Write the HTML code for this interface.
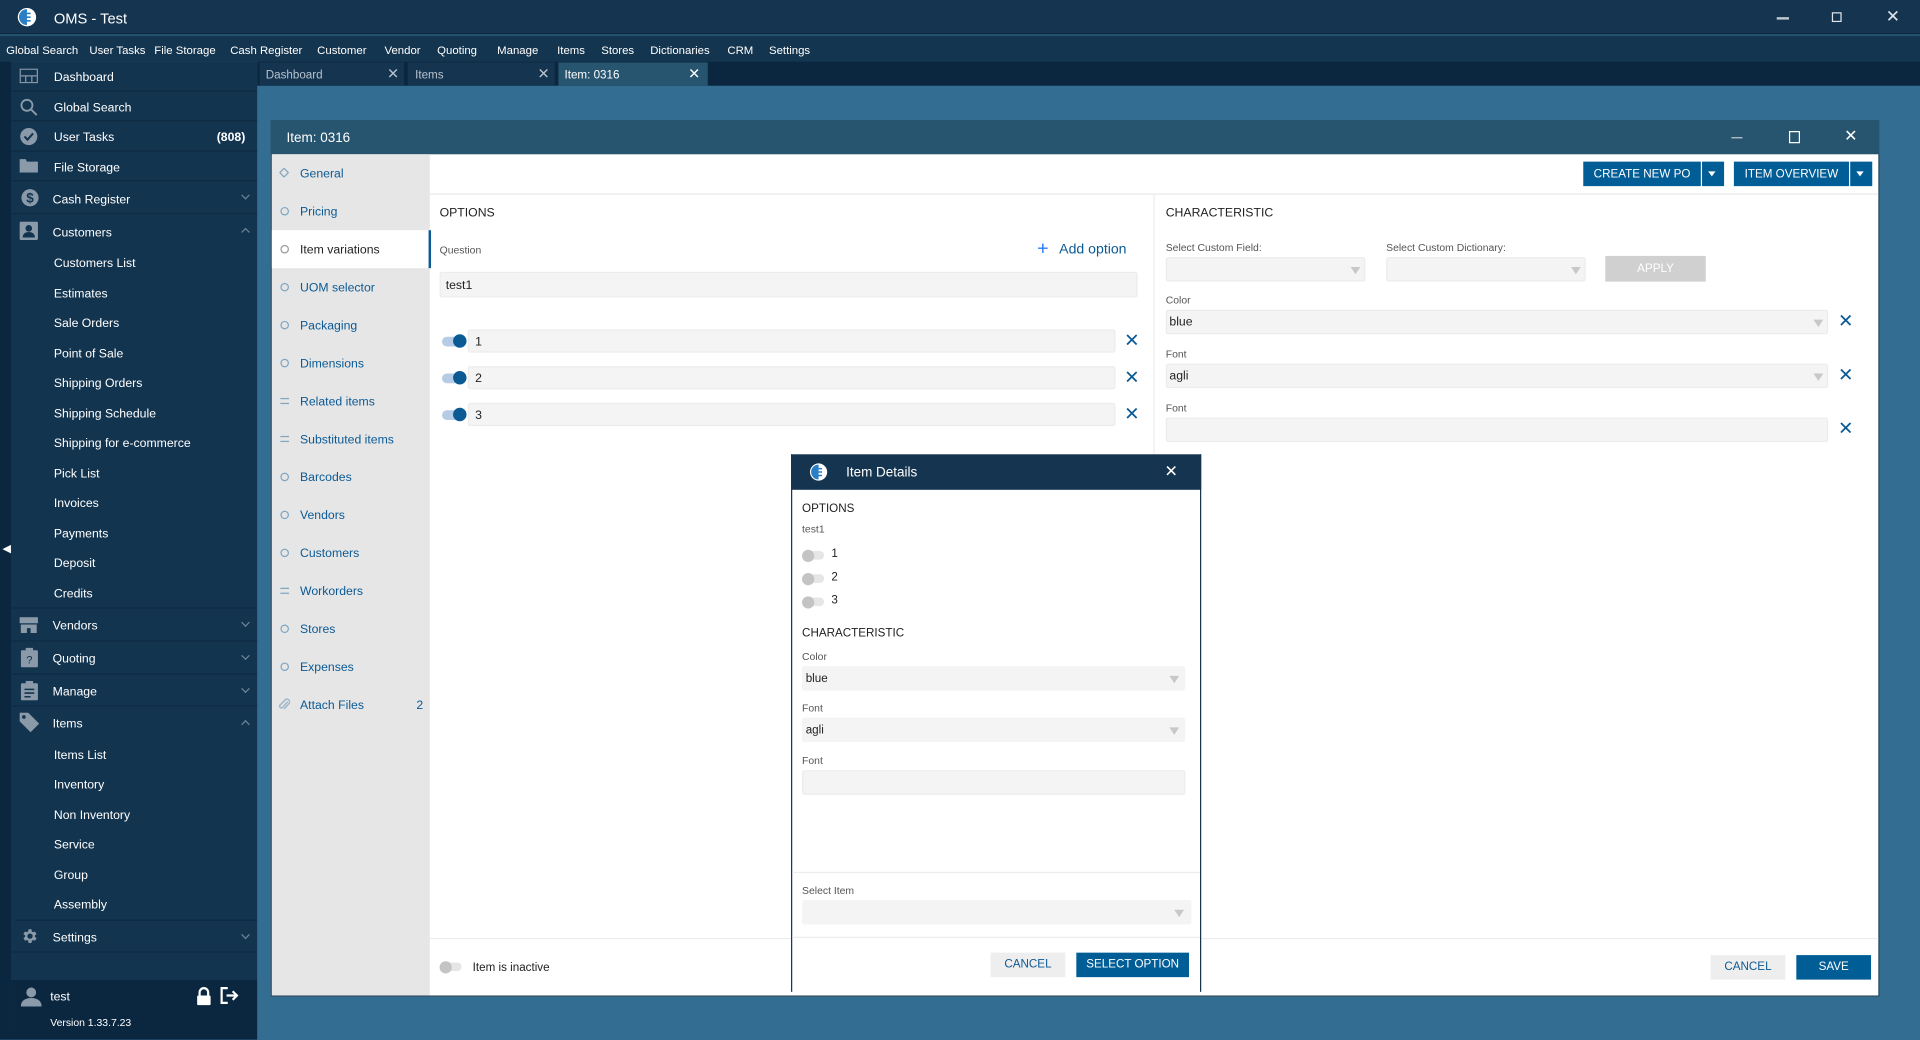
<!DOCTYPE html>
<html><head><meta charset="utf-8">
<style>
*{box-sizing:border-box;margin:0;padding:0}
html,body{width:1920px;height:1040px;overflow:hidden;background:#336d91;font-family:"Liberation Sans",sans-serif}
#w{position:absolute;left:0;top:0;width:1568px;height:849px;transform:scale(1.22449);transform-origin:0 0;background:#336d91;font-size:10px}
.a{position:absolute}
.t{position:absolute;white-space:nowrap}
.m{position:absolute;top:36px;color:#fff;font-size:9.3px;white-space:nowrap}
.side .it{position:absolute;left:9px;width:201px;color:#fff;font-size:10px;border-bottom:1px solid #0e2b44}
.side .it>span.t{margin-top:1px}
.side .sub{position:absolute;left:44px;color:#fff;font-size:10px;margin-top:1px}
.chev{position:absolute;right:7px;width:5px;height:5px;border-right:1.2px solid #6f8396;border-bottom:1.2px solid #6f8396}
.nav{position:absolute;left:0;width:130px;height:31px;color:#0c5a94;font-size:10px}
.nav span{position:absolute;left:23px;top:11px}
.nav i{position:absolute;left:7px;top:12px;width:7px;height:7px;border:1.5px solid #7fa6c2;border-radius:50%}
.nav b{position:absolute;left:7px;top:13px;width:7px;height:5px;border-top:1.2px solid #7fa6c2;border-bottom:1.2px solid #7fa6c2}
.inp{position:absolute;background:#f4f4f4;border-radius:2px;border:1px solid #ececec}
.lbl{position:absolute;color:#555;font-size:8.5px}
.x{position:absolute;color:#0c5a94;font-size:15px;line-height:1}
.tri{position:absolute;width:0;height:0;border-left:4px solid transparent;border-right:4px solid transparent;border-top:6px solid #c8c8c8}
.tog{position:absolute;width:20px;height:8px;border-radius:4px;background:#b5cbe6}
.tog::after{content:"";position:absolute;right:0;top:-2px;width:11px;height:11px;border-radius:50%;background:#0c5a94}
.togo{position:absolute;width:18px;height:7px;border-radius:4px;background:#e6e6e6}
.togo::after{content:"";position:absolute;left:0;top:-1.5px;width:10px;height:10px;border-radius:50%;background:#c4c4c4}
.btn{position:absolute;background:#005d96;color:#fff;font-size:9.5px;text-align:center}
.btng{position:absolute;background:#eeeeee;color:#0c5a94;font-size:9.5px;text-align:center}
</style></head><body>
<div id="w">
<div class="a" style="left:0;top:0;width:1568px;height:28px;background:#15344f;border-bottom:1px solid #0d263b"></div>
<svg class="a" style="left:14px;top:6px" width="16" height="16" viewBox="0 0 16 16"><circle cx="8" cy="8" r="7.5" fill="#fff"/><path d="M8 1.5a6.5 6.5 0 0 0 0 13" fill="#2a7fc4"/><path d="M6 5h5M5 8h6M6 11h5" stroke="#2a7fc4" stroke-width="1.3"/></svg>
<div class="t" style="left:44px;top:8px;color:#fff;font-size:12px">OMS - Test</div>
<div class="a" style="left:1451px;top:14px;width:10px;height:1.5px;background:#bfc8d0"></div>
<div class="a" style="left:1496px;top:10px;width:8px;height:8px;border:1.3px solid #dfe5ea"></div>
<div class="t" style="left:1540px;top:5px;color:#dfe5ea;font-size:14px">✕</div>
<div class="a" style="left:0;top:29px;width:1568px;height:21px;background:#14354f"></div>
<div class="m" style="left:5px">Global Search</div>
<div class="m" style="left:73px">User Tasks</div>
<div class="m" style="left:126px">File Storage</div>
<div class="m" style="left:188px">Cash Register</div>
<div class="m" style="left:259px">Customer</div>
<div class="m" style="left:314px">Vendor</div>
<div class="m" style="left:357px">Quoting</div>
<div class="m" style="left:406px">Manage</div>
<div class="m" style="left:455px">Items</div>
<div class="m" style="left:491px">Stores</div>
<div class="m" style="left:531px">Dictionaries</div>
<div class="m" style="left:594px">CRM</div>
<div class="m" style="left:628px">Settings</div>
<div class="a" style="left:210px;top:50px;width:1358px;height:20px;background:#0b2740"></div>
<div class="a" style="left:212px;top:51px;width:118px;height:19px;background:#15344f"></div>
<div class="t" style="left:217px;top:56px;color:#b7c3ce;font-size:9.5px">Dashboard</div><div class="t" style="left:316px;top:53px;color:#b7c3ce;font-size:12px">✕</div>
<div class="a" style="left:333px;top:51px;width:120px;height:19px;background:#15344f"></div>
<div class="t" style="left:339px;top:56px;color:#b7c3ce;font-size:9.5px">Items</div><div class="t" style="left:439px;top:53px;color:#b7c3ce;font-size:12px">✕</div>
<div class="a" style="left:456px;top:51px;width:122px;height:19px;background:#27546f"></div>
<div class="t" style="left:461px;top:56px;color:#fff;font-size:9.5px">Item: 0316</div><div class="t" style="left:562px;top:53px;color:#fff;font-size:12px">✕</div>
<div class="side">
<div class="a" style="left:0;top:50px;width:9px;height:799px;background:#0b2740"></div>
<div class="a" style="left:9px;top:50px;width:201px;height:750px;background:#13344f"></div>
<div class="t" style="left:2px;top:443px;color:#fff;font-size:9px">◀</div>
<div class="it" style="top:50px;height:25px"><svg class="a" style="left:7px;top:6px" width="15" height="12"><rect x="0.5" y="0.5" width="14" height="11" fill="none" stroke="#8a9aa8"/><path d="M1 6h13M5 6v5M10 6v5" stroke="#8a9aa8"/></svg><span class="t" style="left:35px;top:7px">Dashboard</span></div>
<div class="it" style="top:75px;height:24px"><svg class="a" style="left:7px;top:5px" width="15" height="15"><circle cx="6" cy="6" r="4.5" fill="none" stroke="#8a9aa8" stroke-width="1.5"/><path d="M9.5 9.5l4.5 4.5" stroke="#8a9aa8" stroke-width="1.6"/></svg><span class="t" style="left:35px;top:7px">Global Search</span></div>
<div class="it" style="top:99px;height:25px"><svg class="a" style="left:7px;top:5px" width="15" height="15"><circle cx="7.5" cy="7.5" r="7" fill="#8a9aa8"/><path d="M4 7.5l2.5 2.5 4.5-5" stroke="#13344f" stroke-width="1.7" fill="none"/></svg><span class="t" style="left:35px;top:7px">User Tasks</span><span class="t" style="left:168px;top:7px;font-weight:bold">(808)</span></div>
<div class="it" style="top:124px;height:24px"><svg class="a" style="left:7px;top:5px" width="15" height="12"><path d="M0 1h5l1 2h9v9H0z" fill="#8a9aa8"/></svg><span class="t" style="left:35px;top:7px">File Storage</span></div>
<div class="it" style="top:148px;height:27px"><svg class="a" style="left:8px;top:6px" width="15" height="15"><circle cx="7.5" cy="7.5" r="7" fill="#8a9aa8"/><text x="7.5" y="11.5" font-size="11" text-anchor="middle" fill="#13344f" font-family="Liberation Sans" font-weight="bold">$</text></svg><span class="t" style="left:34px;top:9px">Cash Register</span><i class="chev" style="top:9px;transform:rotate(45deg)"></i></div>
<div class="it" style="top:175px;height:27px;border:none"><svg class="a" style="left:7px;top:6px" width="15" height="15"><rect width="15" height="15" rx="1" fill="#8a9aa8"/><circle cx="7.5" cy="5.5" r="2.7" fill="#13344f"/><path d="M2.5 13c0-3 2.2-4.5 5-4.5s5 1.5 5 4.5z" fill="#13344f"/></svg><span class="t" style="left:34px;top:9px">Customers</span><i class="chev" style="top:12px;transform:rotate(-135deg)"></i></div>
<div class="sub" style="top:209px">Customers List</div>
<div class="sub" style="top:234px">Estimates</div>
<div class="sub" style="top:258px">Sale Orders</div>
<div class="sub" style="top:283px">Point of Sale</div>
<div class="sub" style="top:307px">Shipping Orders</div>
<div class="sub" style="top:332px">Shipping Schedule</div>
<div class="sub" style="top:356px">Shipping for e-commerce</div>
<div class="sub" style="top:381px">Pick List</div>
<div class="sub" style="top:405px">Invoices</div>
<div class="sub" style="top:430px">Payments</div>
<div class="sub" style="top:454px">Deposit</div>
<div class="sub" style="top:479px">Credits</div>
<div class="a" style="left:9px;top:496px;width:201px;height:1px;background:#0e2b44"></div>
<div class="it" style="top:497px;height:27px"><svg class="a" style="left:7px;top:7px" width="15" height="13"><path d="M0 0h15v5H0z M1 6h13v7H9V9H6v4H1z" fill="#8a9aa8"/></svg><span class="t" style="left:34px;top:8px">Vendors</span><i class="chev" style="top:9px;transform:rotate(45deg)"></i></div>
<div class="it" style="top:524px;height:27px"><svg class="a" style="left:8px;top:5px" width="14" height="16"><rect y="2" width="14" height="14" rx="1" fill="#8a9aa8"/><rect x="4" y="0" width="6" height="4" fill="#8a9aa8"/><text x="7" y="13" font-size="9" text-anchor="middle" fill="#13344f" font-family="Liberation Sans">?</text></svg><span class="t" style="left:34px;top:8px">Quoting</span><i class="chev" style="top:9px;transform:rotate(45deg)"></i></div>
<div class="it" style="top:551px;height:26px"><svg class="a" style="left:8px;top:5px" width="14" height="16"><rect y="2" width="14" height="14" rx="1" fill="#8a9aa8"/><rect x="4" y="0" width="6" height="4" fill="#8a9aa8"/><path d="M3 7h8M3 10h8M3 13h5" stroke="#13344f" stroke-width="1.3"/></svg><span class="t" style="left:34px;top:8px">Manage</span><i class="chev" style="top:9px;transform:rotate(45deg)"></i></div>
<div class="it" style="top:577px;height:27px;border:none"><svg class="a" style="left:7px;top:5px" width="16" height="16"><path d="M0 0h7l9 9-7 7-9-9z" fill="#8a9aa8"/><circle cx="3.5" cy="3.5" r="1.5" fill="#13344f"/></svg><span class="t" style="left:34px;top:8px">Items</span><i class="chev" style="top:12px;transform:rotate(-135deg)"></i></div>
<div class="sub" style="top:611px">Items List</div>
<div class="sub" style="top:635px">Inventory</div>
<div class="sub" style="top:660px">Non Inventory</div>
<div class="sub" style="top:684px">Service</div>
<div class="sub" style="top:709px">Group</div>
<div class="sub" style="top:733px">Assembly</div>
<div class="a" style="left:12px;top:751px;width:198px;height:1px;background:#0e2b44"></div>
<div class="it" style="top:752px;height:26px"><svg class="a" style="left:8px;top:5px" width="15" height="15" viewBox="0 0 24 24"><path fill="#8a9aa8" d="M19.4 13a7.7 7.7 0 0 0 0-2l2.1-1.6-2-3.5-2.5 1a7 7 0 0 0-1.7-1L15 3h-4l-.4 2.9a7 7 0 0 0-1.7 1l-2.5-1-2 3.5L6.6 11a7.7 7.7 0 0 0 0 2l-2.1 1.6 2 3.5 2.5-1a7 7 0 0 0 1.7 1L11 21h4l.4-2.9a7 7 0 0 0 1.7-1l2.5 1 2-3.5zM13 15.5a3.5 3.5 0 1 1 0-7 3.5 3.5 0 0 1 0 7z" transform="translate(-1 0)"/></svg><span class="t" style="left:34px;top:8px">Settings</span><i class="chev" style="top:9px;transform:rotate(45deg)"></i></div>
<div class="a" style="left:9px;top:800px;width:201px;height:49px;background:#0b2740"></div>
<svg class="a" style="left:17px;top:806px" width="17" height="16"><circle cx="8.5" cy="4.5" r="4" fill="#8a9aa8"/><path d="M0 16c0-5 4-7 8.5-7S17 11 17 16z" fill="#8a9aa8"/></svg>
<div class="t" style="left:41px;top:809px;color:#fff;font-size:10px">test</div>
<svg class="a" style="left:160px;top:806px" width="13" height="15"><path d="M3 7V4.5a3.5 3.5 0 0 1 7 0V7" fill="none" stroke="#fff" stroke-width="1.8"/><rect x="1" y="7" width="11" height="8" rx="1" fill="#fff"/></svg>
<svg class="a" style="left:180px;top:806px" width="16" height="14"><path d="M6 1H1v12h5" fill="none" stroke="#fff" stroke-width="1.8"/><path d="M5 7h8M10 3.5 13.5 7 10 10.5" fill="none" stroke="#fff" stroke-width="1.8"/></svg>
<div class="t" style="left:41px;top:830px;color:#fff;font-size:8.5px">Version 1.33.7.23</div>
</div>
<div class="a" style="left:221px;top:98px;width:1314px;height:716px;background:#fff;border:1px solid #17384f"></div>
<div class="a" style="left:221px;top:98px;width:1314px;height:28px;background:#27546f"></div>
<div class="t" style="left:234px;top:107px;color:#fff;font-size:11px">Item: 0316</div>
<div class="a" style="left:1414px;top:112px;width:9px;height:1.3px;background:#c0ccd6"></div>
<div class="a" style="left:1461px;top:107px;width:9px;height:10px;border:1.3px solid #fff"></div>
<div class="t" style="left:1506px;top:103px;color:#fff;font-size:13px">✕</div>
<div class="a" style="left:222px;top:126px;width:129px;height:687px;background:#e6e6e6"></div>
<div style="position:absolute;left:222px;top:126px">
<div class="nav" style="top:0"><i style="border-radius:1px;transform:rotate(45deg);width:6px;height:6px"></i><span>General</span></div>
<div class="nav" style="top:31px"><i></i><span>Pricing</span></div>
<div class="nav" style="top:62px;background:#fff;color:#222;border-right:2px solid #0c5a94"><i style="border-color:#999"></i><span>Item variations</span></div>
<div class="nav" style="top:93px"><i></i><span>UOM selector</span></div>
<div class="nav" style="top:124px"><i></i><span>Packaging</span></div>
<div class="nav" style="top:155px"><i></i><span>Dimensions</span></div>
<div class="nav" style="top:186px"><b></b><span>Related items</span></div>
<div class="nav" style="top:217px"><b></b><span>Substituted items</span></div>
<div class="nav" style="top:248px"><i></i><span>Barcodes</span></div>
<div class="nav" style="top:279px"><i></i><span>Vendors</span></div>
<div class="nav" style="top:310px"><i></i><span>Customers</span></div>
<div class="nav" style="top:341px"><b></b><span>Workorders</span></div>
<div class="nav" style="top:372px"><i></i><span>Stores</span></div>
<div class="nav" style="top:403px"><i></i><span>Expenses</span></div>
<div class="nav" style="top:434px"><svg class="a" style="left:5px;top:10px" width="10" height="11"><path d="M8 3 3.5 8a1.5 1.5 0 0 1-2-2L6.5 1a2.5 2.5 0 0 1 3 3L5 9" fill="none" stroke="#9fb8cc" stroke-width="1.2"/></svg><span>Attach Files</span><span style="left:118px">2</span></div>
</div>
<div class="a" style="left:351px;top:158px;width:1183px;height:1px;background:#e8e8e8"></div>
<div class="btn" style="left:1293px;top:132px;width:96px;height:20px;line-height:21px">CREATE NEW PO</div>
<div class="btn" style="left:1390px;top:132px;width:18px;height:20px"></div><div class="a" style="left:1395px;top:140px;border-left:3.5px solid transparent;border-right:3.5px solid transparent;border-top:4px solid #fff"></div>
<div class="btn" style="left:1416px;top:132px;width:94px;height:20px;line-height:21px">ITEM OVERVIEW</div>
<div class="btn" style="left:1511px;top:132px;width:18px;height:20px"></div><div class="a" style="left:1516px;top:140px;border-left:3.5px solid transparent;border-right:3.5px solid transparent;border-top:4px solid #fff"></div>
<div class="a" style="left:942px;top:159px;width:1px;height:607px;background:#ececec"></div>
<div class="t" style="left:359px;top:169px;color:#222;font-size:10px">OPTIONS</div>
<div class="lbl" style="left:359px;top:199px">Question</div>
<div class="t" style="left:847px;top:196px;color:#2979ff;font-size:16px;line-height:1">+</div>
<div class="t" style="left:865px;top:198px;color:#0c5a94;font-size:11.5px">Add option</div>
<div class="inp" style="left:359px;top:222px;width:570px;height:21px"></div><div class="t" style="left:364px;top:228px;color:#222;font-size:10px">test1</div>
<div class="tog" style="left:361px;top:275px"></div><div class="inp" style="left:382px;top:269px;width:529px;height:19px"></div><div class="t" style="left:388px;top:274px;font-size:10px;color:#222">1</div><div class="x" style="left:918px;top:271px">✕</div>
<div class="tog" style="left:361px;top:305px"></div><div class="inp" style="left:382px;top:299px;width:529px;height:19px"></div><div class="t" style="left:388px;top:304px;font-size:10px;color:#222">2</div><div class="x" style="left:918px;top:301px">✕</div>
<div class="tog" style="left:361px;top:335px"></div><div class="inp" style="left:382px;top:329px;width:529px;height:19px"></div><div class="t" style="left:388px;top:334px;font-size:10px;color:#222">3</div><div class="x" style="left:918px;top:331px">✕</div>
<div class="t" style="left:952px;top:169px;color:#222;font-size:10px">CHARACTERISTIC</div>
<div class="lbl" style="left:952px;top:197px">Select Custom Field:</div>
<div class="lbl" style="left:1132px;top:197px">Select Custom Dictionary:</div>
<div class="inp" style="left:952px;top:210px;width:163px;height:20px"></div><div class="tri" style="left:1103px;top:218px"></div>
<div class="inp" style="left:1132px;top:210px;width:163px;height:20px"></div><div class="tri" style="left:1283px;top:218px"></div>
<div class="a" style="left:1311px;top:209px;width:82px;height:21px;background:#d0d0d0;color:#fff;font-size:9.5px;text-align:center;line-height:21px">APPLY</div>
<div class="lbl" style="left:952px;top:240px">Color</div>
<div class="inp" style="left:952px;top:253px;width:541px;height:20px"></div><div class="t" style="left:955px;top:258px;font-size:10px;color:#222">blue</div><div class="tri" style="left:1481px;top:261px"></div><div class="x" style="left:1501px;top:255px">✕</div>
<div class="lbl" style="left:952px;top:284px">Font</div>
<div class="inp" style="left:952px;top:297px;width:541px;height:20px"></div><div class="t" style="left:955px;top:302px;font-size:10px;color:#222">agli</div><div class="tri" style="left:1481px;top:305px"></div><div class="x" style="left:1501px;top:299px">✕</div>
<div class="lbl" style="left:952px;top:328px">Font</div>
<div class="inp" style="left:952px;top:341px;width:541px;height:20px"></div><div class="x" style="left:1501px;top:343px">✕</div>
<div class="a" style="left:351px;top:766px;width:1183px;height:1px;background:#ececec"></div>
<div class="togo" style="left:359px;top:786px"></div>
<div class="t" style="left:386px;top:785px;color:#222;font-size:9.5px">Item is inactive</div>
<div class="btng" style="left:1397px;top:780px;width:61px;height:20px;line-height:20px">CANCEL</div>
<div class="btn" style="left:1467px;top:780px;width:61px;height:20px;line-height:20px">SAVE</div>
<div class="a" style="left:646px;top:371px;width:335px;height:439px;background:#fff;border-left:1px solid #15344f;border-right:1px solid #15344f"></div>
<div class="a" style="left:646px;top:371px;width:335px;height:29px;background:#15344f"></div>
<svg class="a" style="left:661px;top:378px" width="15" height="15" viewBox="0 0 16 16"><circle cx="8" cy="8" r="7.5" fill="#fff"/><path d="M8 1.5a6.5 6.5 0 0 0 0 13" fill="#2a7fc4"/><path d="M6 5h5M5 8h6M6 11h5" stroke="#2a7fc4" stroke-width="1.3"/></svg>
<div class="t" style="left:691px;top:380px;color:#fff;font-size:11px">Item Details</div>
<div class="t" style="left:951px;top:377px;color:#fff;font-size:13px">✕</div>
<div class="t" style="left:655px;top:410px;color:#222;font-size:9.5px">OPTIONS</div>
<div class="lbl" style="left:655px;top:427px">test1</div>
<div class="togo" style="left:655px;top:450px"></div><div class="t" style="left:679px;top:447px;font-size:9.5px;color:#222">1</div>
<div class="togo" style="left:655px;top:469px"></div><div class="t" style="left:679px;top:466px;font-size:9.5px;color:#222">2</div>
<div class="togo" style="left:655px;top:488px"></div><div class="t" style="left:679px;top:485px;font-size:9.5px;color:#222">3</div>
<div class="t" style="left:655px;top:512px;color:#222;font-size:9.5px">CHARACTERISTIC</div>
<div class="lbl" style="left:655px;top:531px">Color</div>
<div class="inp" style="left:655px;top:544px;width:313px;height:20px;border:none"></div><div class="t" style="left:658px;top:549px;font-size:9.5px;color:#222">blue</div><div class="tri" style="left:955px;top:552px"></div>
<div class="lbl" style="left:655px;top:573px">Font</div>
<div class="inp" style="left:655px;top:586px;width:313px;height:20px;border:none"></div><div class="t" style="left:658px;top:591px;font-size:9.5px;color:#222">agli</div><div class="tri" style="left:955px;top:594px"></div>
<div class="lbl" style="left:655px;top:616px">Font</div>
<div class="inp" style="left:655px;top:629px;width:313px;height:20px"></div>
<div class="a" style="left:647px;top:712px;width:333px;height:1px;background:#ececec"></div>
<div class="lbl" style="left:655px;top:722px">Select Item</div>
<div class="inp" style="left:655px;top:735px;width:318px;height:20px;border:none"></div><div class="tri" style="left:959px;top:743px"></div>
<div class="a" style="left:647px;top:765px;width:333px;height:1px;background:#ececec"></div>
<div class="btng" style="left:809px;top:778px;width:61px;height:20px;line-height:20px">CANCEL</div>
<div class="btn" style="left:879px;top:778px;width:92px;height:20px;line-height:20px">SELECT OPTION</div>
</div>
</body></html>
